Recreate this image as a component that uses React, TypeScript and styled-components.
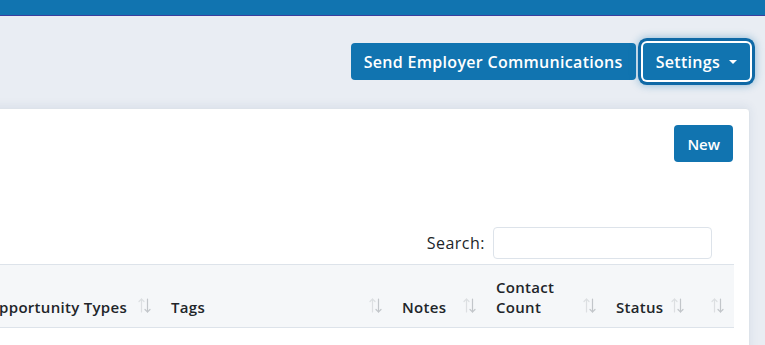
import React from 'react';
import styled, { createGlobalStyle } from 'styled-components';

const GlobalStyle = createGlobalStyle`
  html, body {
    margin: 0;
    padding: 0;
    background: #e9edf3;
    overflow: hidden;
  }
  body {
    font-family: "Open Sans", "Liberation Sans", sans-serif;
    color: #212529;
  }
`;

const TopBar = styled.div`
  height: 15px;
  background: #1174b0;
  border-bottom: 1px solid #3b3f9e;
`;

const Main = styled.main`
  display: flex;
  flex-direction: column;
  align-items: flex-end;
  padding: 27px 15px 0 0;
`;

const Toolbar = styled.div`
  display: flex;
  gap: 7px;
`;

const Button = styled.button<{ $focused?: boolean; $small?: boolean }>`
  display: inline-flex;
  align-items: center;
  gap: 9px;
  height: 37px;
  padding: 0 13px;
  border: none;
  border-radius: 4px;
  background: #1174b0;
  color: #fff;
  font-family: inherit;
  font-size: ${p => (p.$small ? 15 : 16)}px;
  font-weight: 600;
  letter-spacing: ${p => (p.$small ? 0 : 0.3)}px;
  cursor: pointer;
  box-shadow: ${p =>
    p.$focused
      ? '0 0 0 2px #fff, 0 0 0 5px #0f69a6, 0 0 8px 5px rgba(17, 116, 176, 0.45)'
      : 'none'};
`;

const Caret = styled.span`
  width: 0;
  height: 0;
  border-left: 4px solid transparent;
  border-right: 4px solid transparent;
  border-top: 4px solid #fff;
`;

const Card = styled.section`
  flex-shrink: 0;
  box-sizing: border-box;
  width: 1000px;
  margin-top: 28px;
  padding: 16px 16px 0;
  background: #fff;
  border: 1px solid #dde3ea;
  border-radius: 4px;
  box-shadow: 0 -2px 10px rgba(40, 80, 130, 0.08);
`;

const CardHead = styled.div`
  display: flex;
  justify-content: flex-end;
`;

const SearchRow = styled.label`
  display: flex;
  justify-content: flex-end;
  align-items: center;
  gap: 8px;
  margin-top: 65px;
  margin-right: 21px;
  font-size: 16px;
  letter-spacing: 0.5px;
  color: #212529;
`;

const SearchInput = styled.input`
  width: 219px;
  height: 32px;
  box-sizing: border-box;
  border: 1px solid #dde3ea;
  border-radius: 4px;
  outline: none;
`;

const Table = styled.table`
  width: 100%;
  margin-top: 5px;
  border-collapse: collapse;
  table-layout: fixed;
`;

const Th = styled.th<{ $w: number }>`
  position: relative;
  width: ${p => p.$w}px;
  box-sizing: border-box;
  padding: 12px 30px 10px 10px;
  background: #f5f7f9;
  border-top: 1px solid #dde3ea;
  border-bottom: 1px solid #dde3ea;
  text-align: left;
  vertical-align: bottom;
  font-size: 15px;
  font-weight: 600;
  line-height: 20px;
  letter-spacing: 0.3px;
`;

const Label = styled.span<{ $nowrap?: boolean }>`
  white-space: ${p => (p.$nowrap ? 'nowrap' : 'normal')};
`;

const SortIcon = styled.svg`
  position: absolute;
  right: 10px;
  bottom: 13px;
  width: 13px;
  height: 17px;
`;

const BodyCell = styled.td`
  height: 30px;
`;

const SortArrows = () => (
  <SortIcon viewBox="0 0 13 17" fill="none" strokeWidth="1.2" strokeLinecap="round">
    <g stroke="#dcdfe2">
      <path d="M3.5 2v13" />
      <path d="M1 4.5 3.5 2 6 4.5" />
    </g>
    <g stroke="#c2c6ca">
      <path d="M9.5 2v13" />
      <path d="M7 12.5 9.5 15 12 12.5" />
    </g>
  </SortIcon>
);

const columns = [
  { label: 'Employer Name', w: 210 },
  { label: 'Opportunity Types', w: 184 },
  { label: 'Tags', w: 231 },
  { label: 'Notes', w: 94 },
  { label: 'Contact Count', w: 120 },
  { label: 'Status', w: 88 },
  { label: '', w: 39 },
];

export default function App() {
  return (
    <>
      <GlobalStyle />
      <TopBar />
      <Main>
        <Toolbar>
          <Button>Send Employer Communications</Button>
          <Button $focused>
            Settings
            <Caret />
          </Button>
        </Toolbar>
        <Card>
          <CardHead>
            <Button $small>New</Button>
          </CardHead>
          <SearchRow>
            Search:
            <SearchInput type="search" />
          </SearchRow>
          <Table>
            <thead>
              <tr>
                {columns.map(c => (
                  <Th key={c.label || 'actions'} $w={c.w}>
                    <Label $nowrap={c.label === 'Opportunity Types'}>{c.label}</Label>
                    <SortArrows />
                  </Th>
                ))}
              </tr>
            </thead>
            <tbody>
              <tr>
                {columns.map(c => (
                  <BodyCell key={c.label || 'actions'} />
                ))}
              </tr>
            </tbody>
          </Table>
        </Card>
      </Main>
    </>
  );
}
